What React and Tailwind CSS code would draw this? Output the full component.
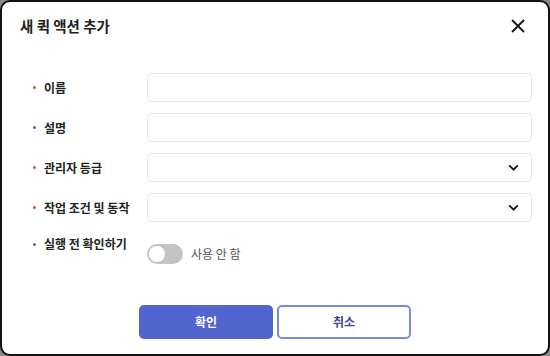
import React, { useState } from 'react'

const fields = [
  { label: '이름', required: true, type: 'input' },
  { label: '설명', required: false, type: 'input' },
  { label: '관리자 등급', required: true, type: 'select' },
  { label: '작업 조건 및 동작', required: true, type: 'select' },
]

const Chevron = () => (
  <svg width="13" height="13" viewBox="0 0 24 24" fill="none" stroke="#111" strokeWidth="3.4" strokeLinecap="round" strokeLinejoin="round">
    <path d="M5 9l7 7 7-7" />
  </svg>
)

const Label = ({ text, required }) => (
  <div className="flex items-center w-[114px] shrink-0 text-[12px] font-bold text-[#222]">
    <span className={`w-[3px] h-[3px] rounded-full mr-[8px] ${required ? 'bg-[#f0443a]' : 'bg-[#666]'}`} />
    {text}
  </div>
)

const App = () => {
  const [confirm, setConfirm] = useState(false)

  return (
    <div
      className="w-[550px] h-[356px] bg-[#8a8a8a]"
      style={{ fontFamily: '"Noto Sans CJK KR", "Noto Sans", sans-serif' }}
    >
      <div className="w-full h-full bg-white border-2 border-[#111] rounded-[10px] flex flex-col">
        <div className="flex items-center justify-between pl-[18px] pr-[23px] pt-[12px] h-[36px]">
          <h2 className="text-[14.5px] font-bold text-[#222]">새 퀵 액션 추가</h2>
          <button className="text-[#111]">
            <svg width="14" height="14" viewBox="0 0 14 14" stroke="currentColor" strokeWidth="1.8" strokeLinecap="round">
              <path d="M1.5 1.5l11 11M12.5 1.5l-11 11" />
            </svg>
          </button>
        </div>

        <div className="flex flex-col gap-[11px] pl-[31px] pr-[16px] mt-[35px]">
          {fields.map((f) => (
            <div key={f.label} className="flex items-center">
              <Label text={f.label} required={f.required} />
              <div className="flex-1 h-[29px] border border-[#e6e6e6] rounded-[4px] flex items-center justify-end pr-[11px]">
                {f.type === 'select' && <Chevron />}
              </div>
            </div>
          ))}
          <div className="flex items-start mt-[2px]">
            <Label text="실행 전 확인하기" required={false} />
            <div className="flex items-center gap-[8px] mt-[9px]">
              <button
                onClick={() => setConfirm(!confirm)}
                className="w-[36px] h-[20px] rounded-full bg-[#c4c4c4] p-[2px] flex items-center"
              >
                <span className="w-[16px] h-[16px] rounded-full bg-white" />
              </button>
              <span className="text-[12px] text-[#555]">사용 안 함</span>
            </div>
          </div>
        </div>

        <div className="flex justify-center gap-[4px] mt-auto mb-[15px]">
          <button className="w-[134px] h-[34px] rounded-[5px] bg-[#5264cf] text-white text-[12px] font-bold">
            확인
          </button>
          <button className="w-[134px] h-[34px] rounded-[5px] bg-white border-2 border-[#7c88e6] text-[#3d4690] text-[12px] font-bold">
            취소
          </button>
        </div>
      </div>
    </div>
  )
}

export default App
